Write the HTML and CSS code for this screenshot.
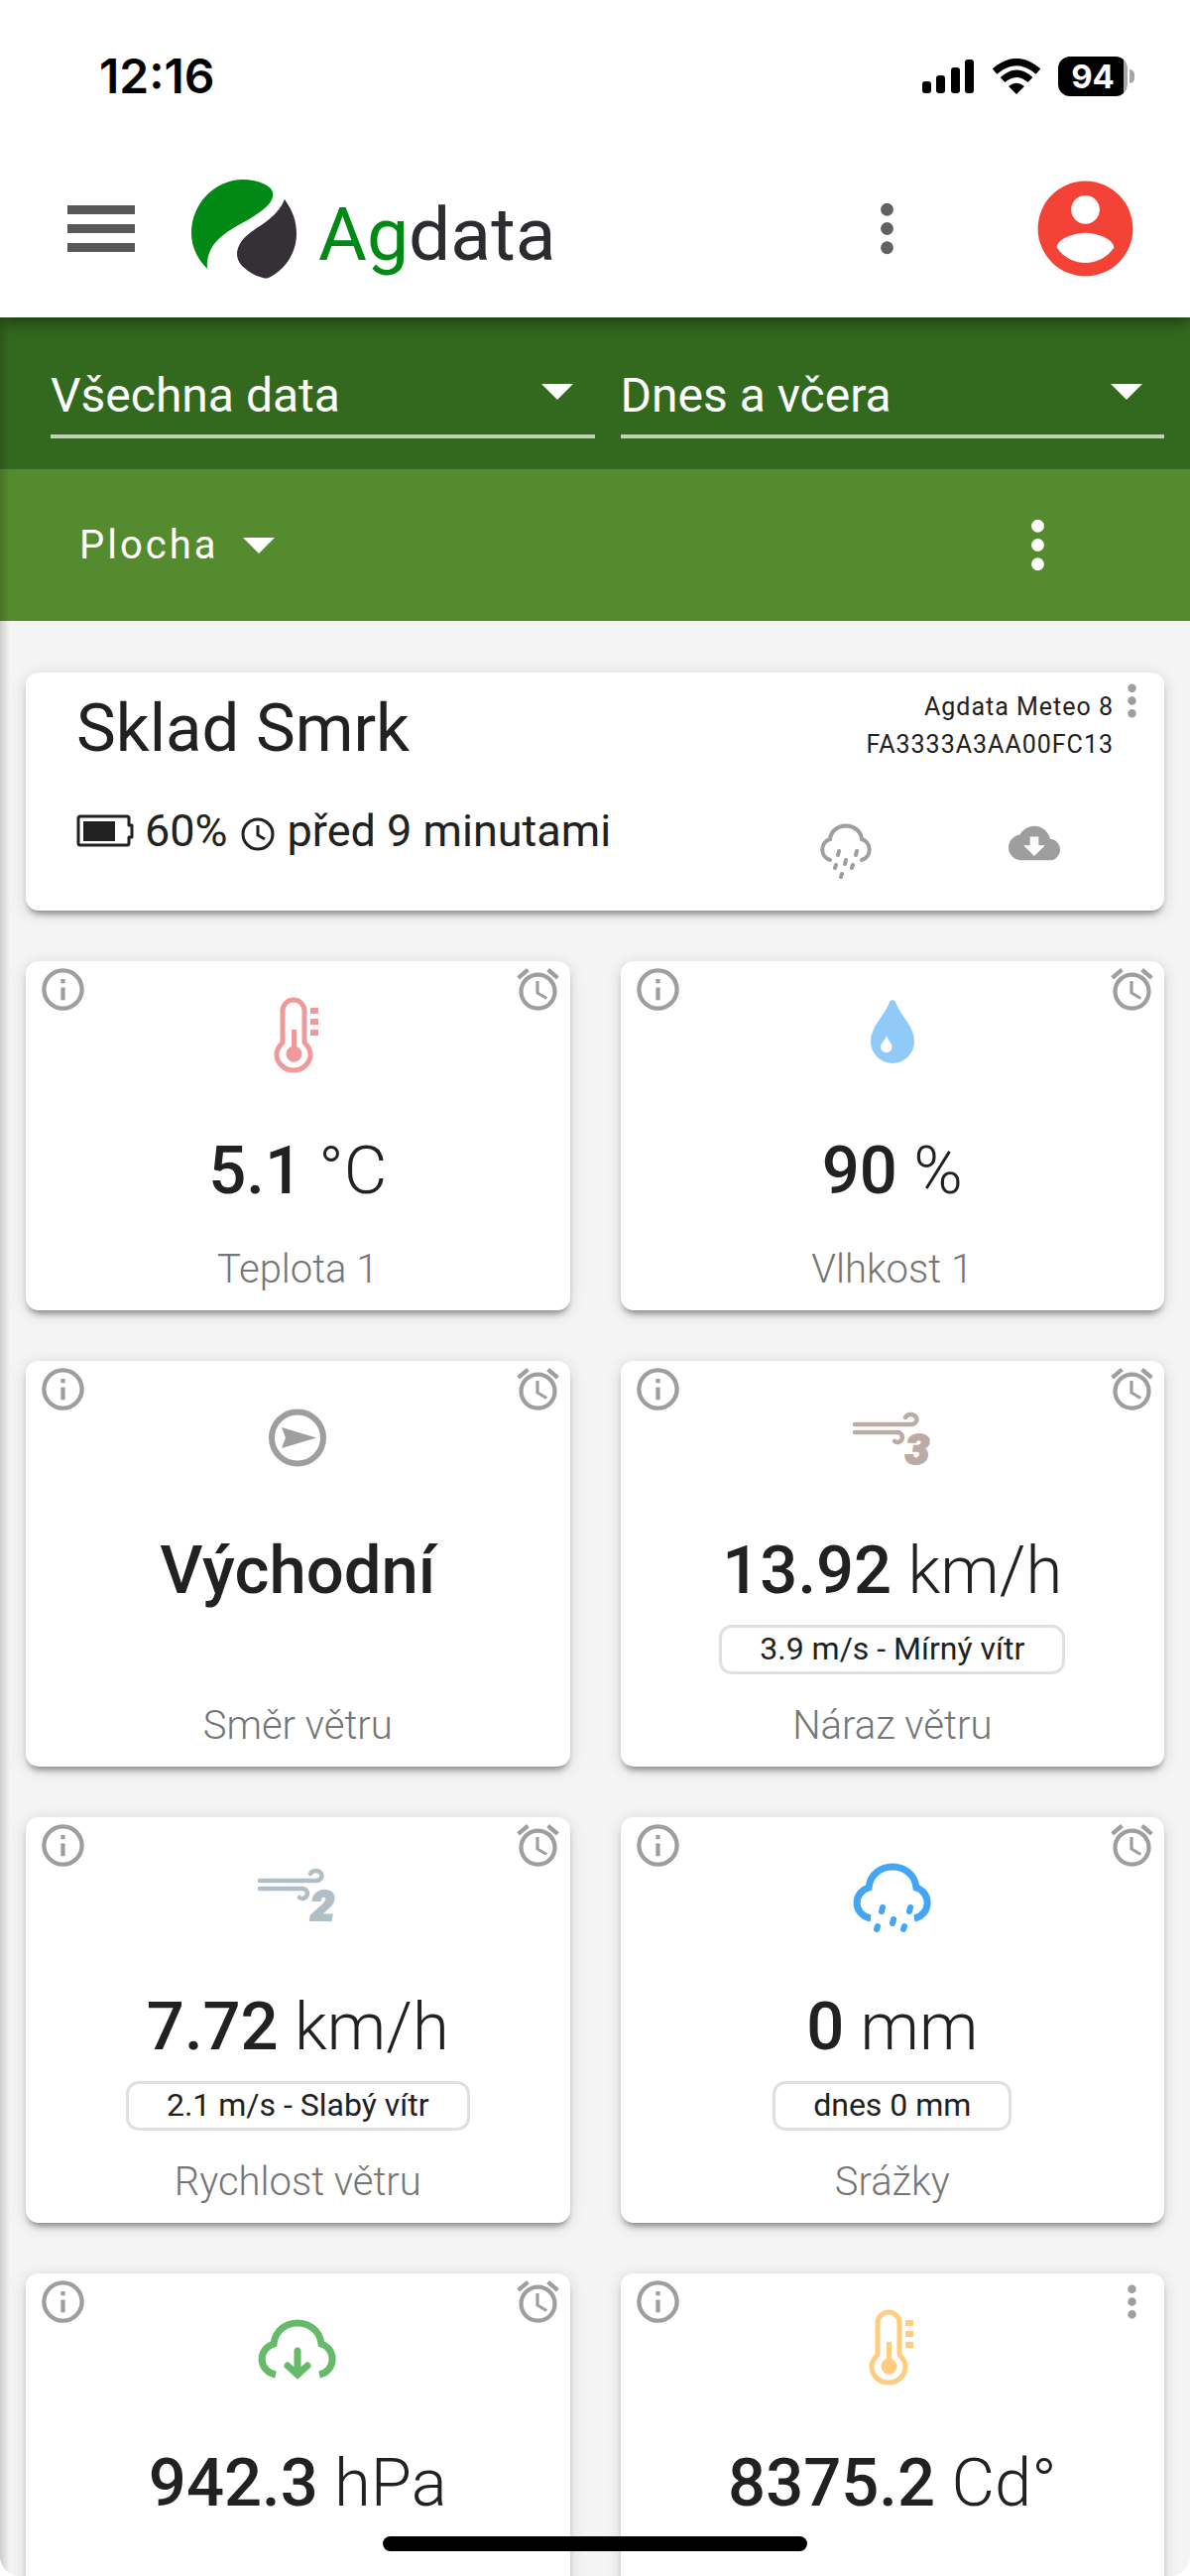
FILE: index.html
```
<!DOCTYPE html>
<html lang="cs">
<head>
<meta charset="utf-8">
<meta name="viewport" content="width=device-width, initial-scale=1">
<title>Agdata</title>
<link rel="stylesheet" href="styles.css">
</head>
<body>
<svg class="sprite" aria-hidden="true">
  <symbol id="i-info" viewBox="0 0 24 24"><path d="M11,9H13V7H11M12,20C7.59,20 4,16.41 4,12C4,7.59 7.59,4 12,4C16.41,4 20,7.59 20,12C20,16.41 16.41,20 12,20M12,2A10,10 0 0,0 2,12A10,10 0 0,0 12,22A10,10 0 0,0 22,12A10,10 0 0,0 12,2M11,17H13V11H11V17Z"/></symbol>
  <symbol id="i-alarm" viewBox="0 0 24 24"><path d="M12,20A7,7 0 0,1 5,13A7,7 0 0,1 12,6A7,7 0 0,1 19,13A7,7 0 0,1 12,20M12,4A9,9 0 0,0 3,13A9,9 0 0,0 12,22A9,9 0 0,0 21,13A9,9 0 0,0 12,4M12.5,8H11V14L15.75,16.85L16.5,15.62L12.5,13.25V8M7.88,3.39L6.6,1.86L2,5.71L3.29,7.24L7.88,3.39M22,5.72L17.4,1.86L16.11,3.39L20.71,7.25L22,5.72Z"/></symbol>
  <symbol id="i-dots" viewBox="0 0 24 24"><path d="M12,16A2,2 0 0,1 14,18A2,2 0 0,1 12,20A2,2 0 0,1 10,18A2,2 0 0,1 12,16M12,10A2,2 0 0,1 14,12A2,2 0 0,1 12,14A2,2 0 0,1 10,12A2,2 0 0,1 12,10M12,4A2,2 0 0,1 14,6A2,2 0 0,1 12,8A2,2 0 0,1 10,6A2,2 0 0,1 12,4Z"/></symbol>
  <symbol id="i-caret" viewBox="0 0 32 16"><path d="M0,0H32L16,16Z"/></symbol>
  <symbol id="i-thermo" viewBox="0 0 102 102">
    <g fill="none" stroke="currentColor" stroke-width="5"><path d="M36,56V24a11,11 0 0 1 22,0V56c4,4 6,8 6,12a17,16 0 0 1 -34,0c0,-4 2,-8 6,-12Z"/></g>
    <path d="M45,43h5v17a8,8 0 1 1 -5,0ZM64,21h8v6h-8ZM64,32h8v6h-8ZM64,43h8v6h-8Z"/>
  </symbol>
  <symbol id="i-drop" viewBox="0 0 102 102"><path fill-rule="evenodd" d="M48,15c1,-2.500 5,-2.500 6,0c4,13 19,24 19,40a22,22 0 0 1 -44,0c0,-16 15,-27 19,-40ZM45,49c-1,4 -6,8 -6,11.500a5.700,5.700 0 0 0 11.500,0c0,-3.500 -4,-7 -5.500,-11.500Z"/></symbol>
  <symbol id="i-east" viewBox="0 0 102 102"><circle cx="51" cy="51.500" r="26" fill="none" stroke="currentColor" stroke-width="6"/><path d="M35,41L70,51.500L35,62L39,51.500Z"/></symbol>
  <symbol id="i-wind" viewBox="0 0 102 102"><g fill="none" stroke="currentColor" stroke-width="4.500" stroke-linecap="round"><path d="M13,38H69a6,5 0 1 0 -5,-7"/><path d="M13,46H55a5,5 0 1 1 -2,9"/></g></symbol>
  <symbol id="i-rain" viewBox="0 0 102 102"><g fill="none" stroke="currentColor" stroke-linecap="round"><path stroke-width="7" stroke-linecap="butt" d="M29,76a17,16 0 0 1 -2,-31c3,-28 45,-28 48,0a16,16 0 0 1 -2,31"/><path stroke-width="6" d="M41,65l-1,4M69,65l-1,4M52,77l-1,4M36,84l-1,3M63,84l-1,3"/></g></symbol>
  <symbol id="i-press" viewBox="0 0 102 102"><g fill="none" stroke="currentColor" stroke-width="7"><path d="M29,76a17,16 0 0 1 -2,-31c3,-28 45,-28 48,0a16,16 0 0 1 -2,31"/><path stroke-linecap="round" d="M51,52V75M41,67l10,9l10,-9"/></g></symbol>
</svg>

<div class="app">
  <div class="status">
    <span class="time">12:16</span>
    <div class="status-icons">
      <svg class="signal" viewBox="0 0 54 36"><rect x="1" y="23" width="9" height="12" rx="3"/><rect x="15" y="17" width="9" height="18" rx="3"/><rect x="30" y="9" width="9" height="26" rx="3"/><rect x="44" y="1" width="9" height="34" rx="3"/></svg>
      <svg class="wifi" viewBox="0 0 50 36"><g fill="none" stroke="#000" stroke-width="7"><path d="M3,13Q25,-6 47,13"/><path d="M11,21.500Q25,9 39,21.500"/></g><path d="M17,28Q25,21.500 33,28L25,36Z"/></svg>
      <span class="battery">94</span><span class="battery-tip"></span>
    </div>
  </div>

  <header class="header">
    <button class="menu" type="button" aria-label="Menu"><span></span><span></span><span></span></button>
    <a class="logo" href="#" aria-label="Agdata">
      <svg viewBox="0 0 108 102"><path fill="#008a15" d="M18,92C8,82 2,70 2,56C2,26 26,2 54,2C66,2 76,6 81,10C87,16 84,24 77,30C62,44 38,50 25,67C20,74 17,82 18,92Z"/><path fill="#352f36" d="M96,22C104,33 108,44 108,57C108,77 95,94 80,101Q77,102 74,101Q62,98 53,89C46,81 47,73 52,65C61,51 87,45 96,22Z"/></svg>
      <span class="brand"><b>Ag</b>data</span>
    </a>
    <button class="icon-btn more" type="button" aria-label="Další"><svg viewBox="0 0 24 24"><use href="#i-dots"/></svg></button>
    <button class="icon-btn account" type="button" aria-label="Účet"><svg viewBox="0 0 24 24"><path d="M12,19.200C9.500,19.200 7.290,17.920 6,16C6.030,14 10,12.900 12,12.900C14,12.900 17.970,14 18,16C16.710,17.920 14.500,19.200 12,19.200M12,5A3,3 0 0,1 15,8A3,3 0 0,1 12,11A3,3 0 0,1 9,8A3,3 0 0,1 12,5M12,2A10,10 0 0,0 2,12A10,10 0 0,0 12,22A10,10 0 0,0 22,12C22,6.470 17.500,2 12,2Z"/></svg></button>
  </header>

  <div class="content">
    <div class="filters">
      <div class="field"><select aria-label="Data"><option>Všechna data</option></select><svg class="caret" viewBox="0 0 32 16"><use href="#i-caret"/></svg></div>
      <div class="field"><select aria-label="Období"><option>Dnes a včera</option></select><svg class="caret" viewBox="0 0 32 16"><use href="#i-caret"/></svg></div>
    </div>
    <div class="toolbar">
      <button class="board" type="button">Plocha<svg class="caret" viewBox="0 0 32 16"><use href="#i-caret"/></svg></button>
      <button class="icon-btn more" type="button" aria-label="Možnosti plochy"><svg viewBox="0 0 24 24"><use href="#i-dots"/></svg></button>
    </div>

    <main class="cards">
      <section class="card station">
        <div class="station-info">
          <h1>Sklad Smrk</h1>
          <p class="state">
            <svg class="cell" viewBox="0 0 58 34"><path fill="none" stroke="currentColor" stroke-width="3" stroke-linejoin="round" d="M4,2H51Q53,2 53,4V11H56V23H53V29Q53,31 51,31H4Q2,31 2,29V4Q2,2 4,2Z"/><path d="M7,7H39V27H7Z"/></svg>
            <span>60%</span>
            <svg class="clock" viewBox="0 0 34 34"><circle cx="17" cy="17" r="15" fill="none" stroke="currentColor" stroke-width="3"/><path fill="none" stroke="currentColor" stroke-width="3" d="M17,8V18L24,22"/></svg>
            <span>před 9 minutami</span>
          </p>
        </div>
        <div class="station-side">
          <p class="device">Agdata Meteo 8<br>FA3333A3AA00FC13</p>
          <div class="station-icons">
            <svg class="forecast" viewBox="0 0 56 56"><g fill="none" stroke="currentColor" stroke-width="4" stroke-linecap="round"><path d="M12,37a11,11 0 0 1 0,-21c2,-18 30,-18 32,0a11,11 0 0 1 0,21"/><path d="M21,28l-1,4M39,28l-1,4M28,37l-1,4M18,42l-1,3M35,42l-1,3M24,51l-1,3"/></g></svg>
            <svg class="download" viewBox="0 0 24 24"><path d="M17,13L12,18L7,13H10V9H14V13M19.350,10.030C18.670,6.590 15.640,4 12,4C9.110,4 6.600,5.640 5.350,8.030C2.340,8.360 0,10.900 0,14A6,6 0 0,0 6,20H19A5,5 0 0,0 24,15C24,12.360 21.950,10.220 19.350,10.030Z"/></svg>
          </div>
        </div>
        <button class="icon-btn corner" type="button" aria-label="Možnosti"><svg viewBox="0 0 24 24"><use href="#i-dots"/></svg></button>
      </section>

      <article class="card tile">
        <button class="icon-btn info" type="button" aria-label="Info"><svg viewBox="0 0 24 24"><use href="#i-info"/></svg></button>
        <button class="icon-btn corner" type="button" aria-label="Alarm"><svg viewBox="0 0 24 24"><use href="#i-alarm"/></svg></button>
        <div class="glyph red"><svg viewBox="0 0 102 102"><use href="#i-thermo"/></svg></div>
        <p class="value"><strong>5.1</strong> °C</p>
        <h2>Teplota 1</h2>
      </article>
      <article class="card tile">
        <button class="icon-btn info" type="button" aria-label="Info"><svg viewBox="0 0 24 24"><use href="#i-info"/></svg></button>
        <button class="icon-btn corner" type="button" aria-label="Alarm"><svg viewBox="0 0 24 24"><use href="#i-alarm"/></svg></button>
        <div class="glyph lightblue"><svg viewBox="0 0 102 102"><use href="#i-drop"/></svg></div>
        <p class="value"><strong>90</strong> %</p>
        <h2>Vlhkost 1</h2>
      </article>
      <article class="card tile">
        <button class="icon-btn info" type="button" aria-label="Info"><svg viewBox="0 0 24 24"><use href="#i-info"/></svg></button>
        <button class="icon-btn corner" type="button" aria-label="Alarm"><svg viewBox="0 0 24 24"><use href="#i-alarm"/></svg></button>
        <div class="glyph gray"><svg viewBox="0 0 102 102"><use href="#i-east"/></svg></div>
        <p class="value"><strong>Východní</strong></p>
        <h2>Směr větru</h2>
      </article>
      <article class="card tile">
        <button class="icon-btn info" type="button" aria-label="Info"><svg viewBox="0 0 24 24"><use href="#i-info"/></svg></button>
        <button class="icon-btn corner" type="button" aria-label="Alarm"><svg viewBox="0 0 24 24"><use href="#i-alarm"/></svg></button>
        <div class="glyph brown"><svg viewBox="0 0 102 102"><use href="#i-wind"/><text class="force" x="64" y="78">3</text></svg></div>
        <p class="value"><strong>13.92</strong> km/h</p>
        <span class="pill">3.9 m/s - Mírný vítr</span>
        <h2>Náraz větru</h2>
      </article>
      <article class="card tile">
        <button class="icon-btn info" type="button" aria-label="Info"><svg viewBox="0 0 24 24"><use href="#i-info"/></svg></button>
        <button class="icon-btn corner" type="button" aria-label="Alarm"><svg viewBox="0 0 24 24"><use href="#i-alarm"/></svg></button>
        <div class="glyph bluegray"><svg viewBox="0 0 102 102"><use href="#i-wind"/><text class="force" x="64" y="78">2</text></svg></div>
        <p class="value"><strong>7.72</strong> km/h</p>
        <span class="pill">2.1 m/s - Slabý vítr</span>
        <h2>Rychlost větru</h2>
      </article>
      <article class="card tile">
        <button class="icon-btn info" type="button" aria-label="Info"><svg viewBox="0 0 24 24"><use href="#i-info"/></svg></button>
        <button class="icon-btn corner" type="button" aria-label="Alarm"><svg viewBox="0 0 24 24"><use href="#i-alarm"/></svg></button>
        <div class="glyph blue"><svg viewBox="0 0 102 102"><use href="#i-rain"/></svg></div>
        <p class="value"><strong>0</strong> mm</p>
        <span class="pill">dnes 0 mm</span>
        <h2>Srážky</h2>
      </article>
      <article class="card tile tall">
        <button class="icon-btn info" type="button" aria-label="Info"><svg viewBox="0 0 24 24"><use href="#i-info"/></svg></button>
        <button class="icon-btn corner" type="button" aria-label="Alarm"><svg viewBox="0 0 24 24"><use href="#i-alarm"/></svg></button>
        <div class="glyph green"><svg viewBox="0 0 102 102"><use href="#i-press"/></svg></div>
        <p class="value"><strong>942.3</strong> hPa</p>
      </article>
      <article class="card tile tall">
        <button class="icon-btn info" type="button" aria-label="Info"><svg viewBox="0 0 24 24"><use href="#i-info"/></svg></button>
        <button class="icon-btn corner" type="button" aria-label="Možnosti"><svg viewBox="0 0 24 24"><use href="#i-dots"/></svg></button>
        <div class="glyph orange"><svg viewBox="0 0 102 102"><use href="#i-thermo"/></svg></div>
        <p class="value"><strong>8375.2</strong> Cd°</p>
      </article>
    </main>
  </div>
  <div class="home"></div>
</div>
</body>
</html>
```
FILE: styles.css
```
* { box-sizing: border-box; }
body { margin: 0; background: #fff; color: #212121; font-family: Roboto, "Liberation Sans", sans-serif; }
p, h1, h2 { margin: 0; font-weight: 400; }
button { border: 0; padding: 0; background: none; color: inherit; font: inherit; }
svg { display: block; fill: currentColor; }
.sprite { position: absolute; width: 0; height: 0; }

.app { height: 100vh; display: flex; flex-direction: column; overflow: hidden; }

.status { flex: none; height: 140px; padding: 14px 56px 0 100px; display: flex; align-items: center; justify-content: space-between; position: relative; z-index: 2; background: #fff; color: #000; }
.time { font: 600 48px/56px Inter, sans-serif; }
.status-icons { display: flex; align-items: center; }
.signal { width: 54px; height: 36px; margin-right: 17px; }
.wifi { width: 50px; height: 36px; margin-right: 17px; }
.battery { width: 70px; height: 40px; border-radius: 12px; background: linear-gradient(90deg, #000 66px, #a6a6a6 66px); color: #fff; font: 700 33px/40px Inter, sans-serif; text-align: center; }
.battery-tip { width: 5px; height: 14px; margin-left: 2px; border-radius: 0 5px 5px 0; background: #a6a6a6; }

.header { flex: none; height: 180px; padding: 0 48px 0 68px; display: flex; align-items: center; position: relative; z-index: 1; background: #fff; box-shadow: 0 4px 16px rgba(0, 0, 0, .5); }
.menu { width: 68px; display: flex; flex-direction: column; gap: 10px; }
.menu span { height: 9px; background: #585858; }
.logo { display: flex; align-items: center; margin-left: 55px; color: #2b2b30; text-decoration: none; }
.logo svg { width: 108px; height: 102px; }
.brand { margin: 11px 0 0 22px; font-size: 75px; line-height: 90px; }
.brand b { font-weight: 400; color: #008a15; }
.icon-btn svg { width: 51px; height: 51px; }
.more svg { width: 77px; height: 77px; }
.header .more { margin-left: auto; color: #616161; }
.account { margin-left: 104px; color: #f44336; }
.account svg { width: 115px; height: 115px; }

.content { flex: 1; min-height: 0; overflow: hidden; background: #f4f4f4; position: relative; border-radius: 0 0 20px 20px; }
.content::before { content: ""; position: absolute; z-index: 2; inset: 0 auto 0 0; width: 10px; background: linear-gradient(90deg, rgba(0, 0, 0, .16), transparent); }

.filters { height: 153px; padding: 34px 26px 32px 51px; display: grid; grid-template-columns: 1fr 1fr; gap: 26px; background: #33691e; color: #fff; }
.field { height: 88px; position: relative; border-bottom: 4px solid #bed2b4; }
.field select { width: 100%; height: 84px; padding: 6px 0 0; border: 0; background: none; color: inherit; font: 400 48px/60px Roboto, sans-serif; appearance: none; }
.caret { width: 32px; height: 16px; }
.field .caret { position: absolute; right: 22px; top: 33px; pointer-events: none; }
.toolbar { height: 153px; padding: 0 115px 0 80px; display: flex; align-items: center; justify-content: space-between; background: #558b2f; color: #fff; }
.board { display: flex; align-items: center; gap: 24px; font-size: 40px; line-height: 48px; letter-spacing: 3px; }

.cards { padding: 52px 26px; display: grid; grid-template-columns: 1fr 1fr; gap: 51px; }
.card { position: relative; background: #fff; border-radius: 13px; box-shadow: 0 6px 6px -3px rgba(0, 0, 0, .4), 0 3px 16px rgba(0, 0, 0, .14); }
.station { grid-column: 1 / -1; min-height: 240px; padding: 16px 51px 26px; display: flex; justify-content: space-between; }
.station h1 { font-size: 67px; line-height: 80px; }
.state { display: flex; align-items: center; margin-top: 38px; font-size: 45px; line-height: 52px; }
.cell { width: 58px; height: 34px; margin-right: 11px; }
.clock { width: 34px; height: 34px; margin: 6px 13px 0; }
.station-side { display: flex; flex-direction: column; align-items: flex-end; color: #9e9e9e; }
.device { font-size: 25px; line-height: 38px; letter-spacing: 1px; color: #212121; text-align: right; }
.station-icons { display: flex; gap: 136px; margin: 60px 54px 0 0; }
.forecast { width: 56px; height: 56px; }
.station .download { width: 52px; height: 52px; margin-top: -6px; }
.corner, .info { position: absolute; top: 3px; color: #9e9e9e; }
.corner { right: 7px; }
.info { left: 12px; }

.tile { display: flex; flex-direction: column; align-items: center; padding: 26px 0 18px; }
.glyph { width: 102px; height: 102px; }
.force { font: italic 900 43px Roboto, sans-serif; stroke: currentColor; stroke-width: 2px; }
.red { color: #ef9a9a; }
.lightblue { color: #90caf9; }
.gray { color: #9e9e9e; }
.brown { color: #bcaaa4; }
.bluegray { color: #b0bec5; }
.blue { color: #42a5f5; }
.green { color: #66bb6a; }
.orange { color: #ffcc80; }
.value { margin: 43px 0 8px; font-size: 67px; line-height: 80px; font-weight: 300; }
.value strong { font-weight: 500; }
.pill { margin-top: 7px; padding: 0 38px; height: 50px; border: 3px solid #e0e0e0; border-radius: 13px; font-size: 32px; line-height: 42px; }
.tile h2 { margin-top: auto; padding-top: 29px; font-size: 40px; line-height: 46px; font-weight: 300; color: #757575; }
.tall { min-height: 352px; }

.home { position: fixed; z-index: 3; left: 50%; bottom: 25px; width: 428px; height: 15px; margin-left: -214px; border-radius: 8px; background: #000; }
```
